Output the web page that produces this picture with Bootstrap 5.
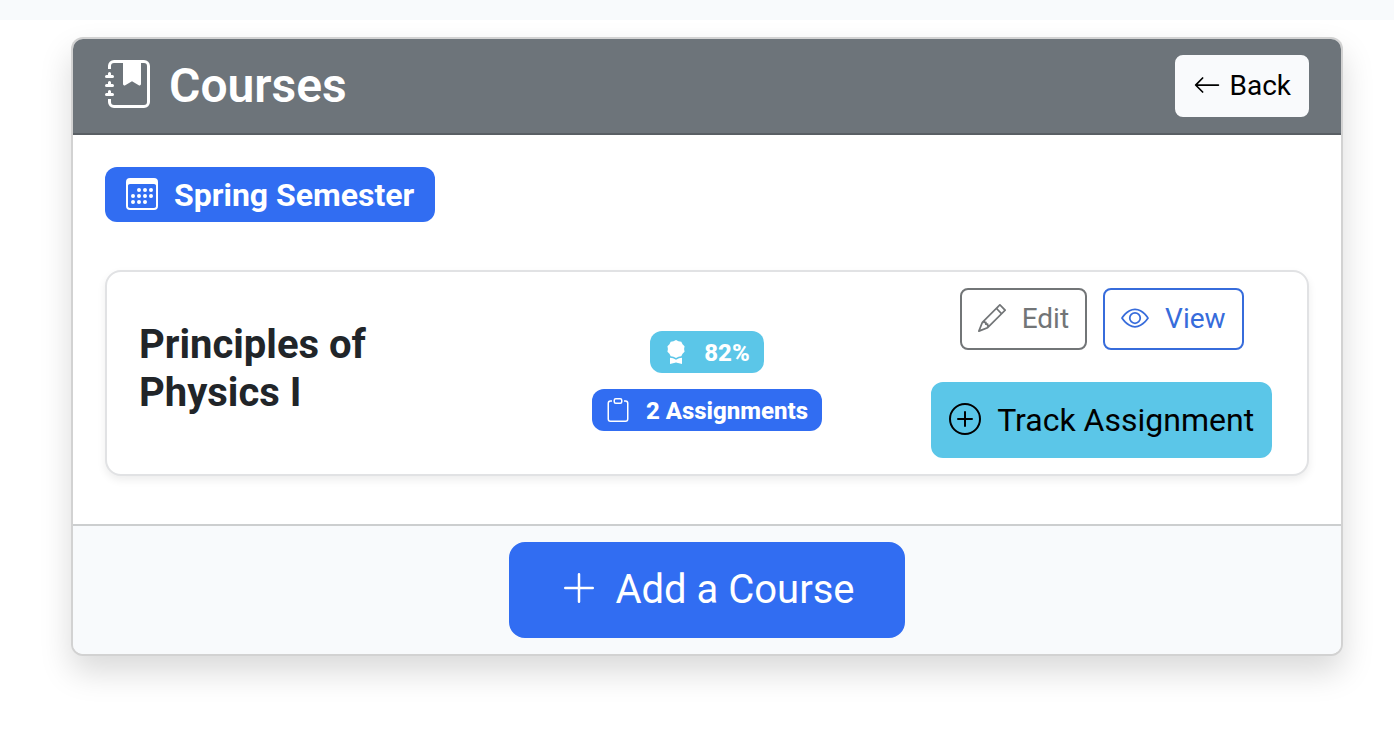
<!DOCTYPE html>
<html lang="en">
<head>
<meta charset="utf-8">
<meta name="viewport" content="width=device-width, initial-scale=1">
<title>Courses</title>
<link href="https://cdn.jsdelivr.net/npm/bootstrap@5.3.0/dist/css/bootstrap.min.css" rel="stylesheet">
<style>
  /* Every Bootstrap rem size doubles with the root size */
  html { font-size: 32px; }
  body { font-family: Roboto, "Liberation Sans", sans-serif; background: #fff; }
  .top-strip { height: 20px; background: #f8fafc; }
  .page-main { padding: 17px 51px 48px 71px; }
  .bi { width: 1em; height: 1em; fill: currentColor; vertical-align: -.125em; }

  .card { --bs-card-border-width: 2px; --bs-card-border-radius: 12px; --bs-card-inner-border-radius: 10px; --bs-card-border-color: rgba(0, 0, 0, .175); }
  .courses-panel { box-shadow: 0 16px 32px rgba(0, 0, 0, .15); }
  .courses-head { background: #6d747a; color: #fff; }
  .courses-head h1 { font-size: 48px; font-weight: 600; }
  .courses-foot { background: #f8fafc; }

  .btn { --bs-btn-border-width: 2px; --bs-btn-padding-x: 16px; }
  .btn-sm { --bs-btn-font-size: 28px; --bs-btn-border-radius: 8px; }
  .btn-lg { --bs-btn-border-radius: 16px; }
  .btn-light { --bs-btn-bg: #f9fafc; --bs-btn-border-color: #f9fafc; }
  .btn-primary { --bs-btn-bg: #316df2; --bs-btn-border-color: #316df2; }
  .btn-outline-primary { --bs-btn-color: #376cdb; --bs-btn-border-color: #376cdb; }
  .btn-outline-secondary { --bs-btn-color: #727577; --bs-btn-border-color: #727577; }
  .btn-info { --bs-btn-bg: #5bc6e8; --bs-btn-border-color: #5bc6e8; }

  .badge { border-radius: 12px; }
  .badge-term { font-size: 32px; padding: 11px 21px; background: #316df2; }
  .badge-stat { font-size: 24px; font-weight: 800; padding: 9px 14px 8px; }
  .badge-grade { background: #5bc6e8; }
  .badge-count { background: #316df2; }

  .course-item { --bs-card-border-radius: 16px; --bs-card-border-color: #e1e2e4; box-shadow: 0 4px 8px rgba(0, 0, 0, .075); }
  .course-item h2 { font-size: 40px; font-weight: 700; }
</style>
</head>
<body>
<div class="top-strip"></div>
<main class="page-main">
  <section class="card courses-panel">
    <div class="card-header courses-head d-flex justify-content-between align-items-center">
      <h1 class="mb-0"><svg class="bi me-2" viewBox="0 0 16 16" aria-hidden="true"><path d="M6 1h6v7a.5.5 0 0 1-.757.429L9 7.083 6.757 8.43A.5.5 0 0 1 6 8V1z"/><path d="M3 0h10a2 2 0 0 1 2 2v12a2 2 0 0 1-2 2H3a2 2 0 0 1-2-2v-1h1v1a1 1 0 0 0 1 1h10a1 1 0 0 0 1-1V2a1 1 0 0 0-1-1H3a1 1 0 0 0-1 1v1H1V2a2 2 0 0 1 2-2z"/><path d="M1 5v-.5a.5.5 0 0 1 1 0V5h.5a.5.5 0 0 1 0 1h-2a.5.5 0 0 1 0-1H1zm0 3v-.5a.5.5 0 0 1 1 0V8h.5a.5.5 0 0 1 0 1h-2a.5.5 0 0 1 0-1H1zm0 3v-.5a.5.5 0 0 1 1 0v.5h.5a.5.5 0 0 1 0 1h-2a.5.5 0 0 1 0-1H1z"/></svg>Courses</h1>
      <button type="button" class="btn btn-light btn-sm"><svg class="bi me-1" viewBox="0 0 16 16" aria-hidden="true"><path d="M15 8a.5.5 0 0 0-.5-.5H2.707l3.147-3.146a.5.5 0 1 0-.708-.708l-4 4a.5.5 0 0 0 0 .708l4 4a.5.5 0 0 0 .708-.708L2.707 8.5H14.5A.5.5 0 0 0 15 8z"/></svg>Back</button>
    </div>

    <div class="card-body">
      <div class="d-flex mb-4">
        <span class="badge badge-term"><svg class="bi me-2" viewBox="0 0 16 16" aria-hidden="true"><path d="M14 0H2a2 2 0 0 0-2 2v12a2 2 0 0 0 2 2h12a2 2 0 0 0 2-2V2a2 2 0 0 0-2-2zM1 3.857C1 3.384 1.448 3 2 3h12c.552 0 1 .384 1 .857v10.286c0 .473-.448.857-1 .857H2c-.552 0-1-.384-1-.857V3.857z"/><path d="M6.5 7a1 1 0 1 0 0-2 1 1 0 0 0 0 2zm3 0a1 1 0 1 0 0-2 1 1 0 0 0 0 2zm3 0a1 1 0 1 0 0-2 1 1 0 0 0 0 2zm-9 3a1 1 0 1 0 0-2 1 1 0 0 0 0 2zm3 0a1 1 0 1 0 0-2 1 1 0 0 0 0 2zm3 0a1 1 0 1 0 0-2 1 1 0 0 0 0 2zm3 0a1 1 0 1 0 0-2 1 1 0 0 0 0 2zm-9 3a1 1 0 1 0 0-2 1 1 0 0 0 0 2zm3 0a1 1 0 1 0 0-2 1 1 0 0 0 0 2zm3 0a1 1 0 1 0 0-2 1 1 0 0 0 0 2z"/></svg>Spring Semester</span>
      </div>

      <article class="card course-item mb-2">
        <div class="card-body py-2">
          <div class="row align-items-center">
            <div class="col-4">
              <h2 class="mb-1">Principles of Physics I</h2>
            </div>
            <div class="col-4 d-flex flex-column align-items-center gap-2 pt-2">
              <span class="badge badge-stat badge-grade"><svg class="bi me-2" viewBox="0 0 16 16" aria-hidden="true"><path d="m8 0 1.669.864 1.858.282.842 1.68 1.337 1.32L13.4 6l.306 1.854-1.337 1.32-.842 1.68-1.858.282L8 12l-1.669-.864-1.858-.282-.842-1.68-1.337-1.32L2.6 6l-.306-1.854 1.337-1.32.842-1.68L6.331.864 8 0z"/><path d="M4 11.794V16l4-1 4 1v-4.206l-2.018.306L8 13.126 6.018 12.1 4 11.794z"/></svg>82%</span>
              <span class="badge badge-stat badge-count"><svg class="bi me-2" viewBox="0 0 16 16" aria-hidden="true"><path d="M4 1.5H3a2 2 0 0 0-2 2V14a2 2 0 0 0 2 2h10a2 2 0 0 0 2-2V3.5a2 2 0 0 0-2-2h-1v1h1a1 1 0 0 1 1 1V14a1 1 0 0 1-1 1H3a1 1 0 0 1-1-1V3.5a1 1 0 0 1 1-1h1v-1z"/><path d="M9.5 1a.5.5 0 0 1 .5.5v1a.5.5 0 0 1-.5.5h-3a.5.5 0 0 1-.5-.5v-1a.5.5 0 0 1 .5-.5h3zm-3-1A1.5 1.5 0 0 0 5 1.5v1A1.5 1.5 0 0 0 6.5 4h3A1.5 1.5 0 0 0 11 2.5v-1A1.5 1.5 0 0 0 9.5 0h-3z"/></svg>2 Assignments</span>
            </div>
            <div class="col-4 d-flex flex-column align-items-center">
              <div class="d-flex gap-2 mb-3">
                <button type="button" class="btn btn-outline-secondary btn-sm"><svg class="bi me-2" viewBox="0 0 16 16" aria-hidden="true"><path d="M12.146.146a.5.5 0 0 1 .708 0l3 3a.5.5 0 0 1 0 .708l-10 10a.5.5 0 0 1-.168.11l-5 2a.5.5 0 0 1-.65-.65l2-5a.5.5 0 0 1 .11-.168l10-10zM11.207 2.5 13.5 4.793 14.793 3.5 12.5 1.207 11.207 2.5zm1.586 3L10.5 3.207 4 9.707V10h.5a.5.5 0 0 1 .5.5v.5h.5a.5.5 0 0 1 .5.5v.5h.293l6.5-6.5zm-9.761 5.175-.106.106-1.528 3.821 3.821-1.528.106-.106A.5.5 0 0 1 5 12.5V12h-.5a.5.5 0 0 1-.5-.5V11h-.5a.5.5 0 0 1-.468-.325z"/></svg>Edit</button>
                <button type="button" class="btn btn-outline-primary btn-sm"><svg class="bi me-2" viewBox="0 0 16 16" aria-hidden="true"><path d="M16 8s-3-5.500-8-5.500S0 8 0 8s3 5.500 8 5.500S16 8 16 8zM1.173 8a13.133 13.133 0 0 1 1.660-2.043C4.120 4.668 5.880 3.500 8 3.500c2.120 0 3.879 1.168 5.168 2.457A13.133 13.133 0 0 1 14.828 8c-.058.087-.122.183-.195.288-.335.480-.830 1.120-1.465 1.755C11.879 11.332 10.119 12.500 8 12.500c-2.120 0-3.879-1.168-5.168-2.457A13.134 13.134 0 0 1 1.172 8z"/><path d="M8 5.500a2.500 2.500 0 1 0 0 5 2.500 2.500 0 0 0 0-5zM4.500 8a3.500 3.500 0 1 1 7 0 3.500 3.500 0 0 1-7 0z"/></svg>View</button>
              </div>
              <button type="button" class="btn btn-info"><svg class="bi me-2" viewBox="0 0 16 16" aria-hidden="true"><path d="M8 15A7 7 0 1 1 8 1a7 7 0 0 1 0 14zm0 1A8 8 0 1 0 8 0a8 8 0 0 0 0 16z"/><path d="M8 4a.5.5 0 0 1 .5.5v3h3a.5.5 0 0 1 0 1h-3v3a.5.5 0 0 1-1 0v-3h-3a.5.5 0 0 1 0-1h3v-3A.5.5 0 0 1 8 4z"/></svg>Track Assignment</button>
            </div>
          </div>
        </div>
      </article>
    </div>

    <div class="card-footer courses-foot text-center">
      <button type="button" class="btn btn-primary btn-lg px-4"><svg class="bi me-2" viewBox="0 0 16 16" aria-hidden="true"><path d="M8 2a.5.5 0 0 1 .5.5v5h5a.5.5 0 0 1 0 1h-5v5a.5.5 0 0 1-1 0v-5h-5a.5.5 0 0 1 0-1h5v-5A.5.5 0 0 1 8 2z"/></svg>Add a Course</button>
    </div>
  </section>
</main>
<script src="https://cdn.jsdelivr.net/npm/bootstrap@5.3.0/dist/js/bootstrap.bundle.min.js"></script>
</body>
</html>
